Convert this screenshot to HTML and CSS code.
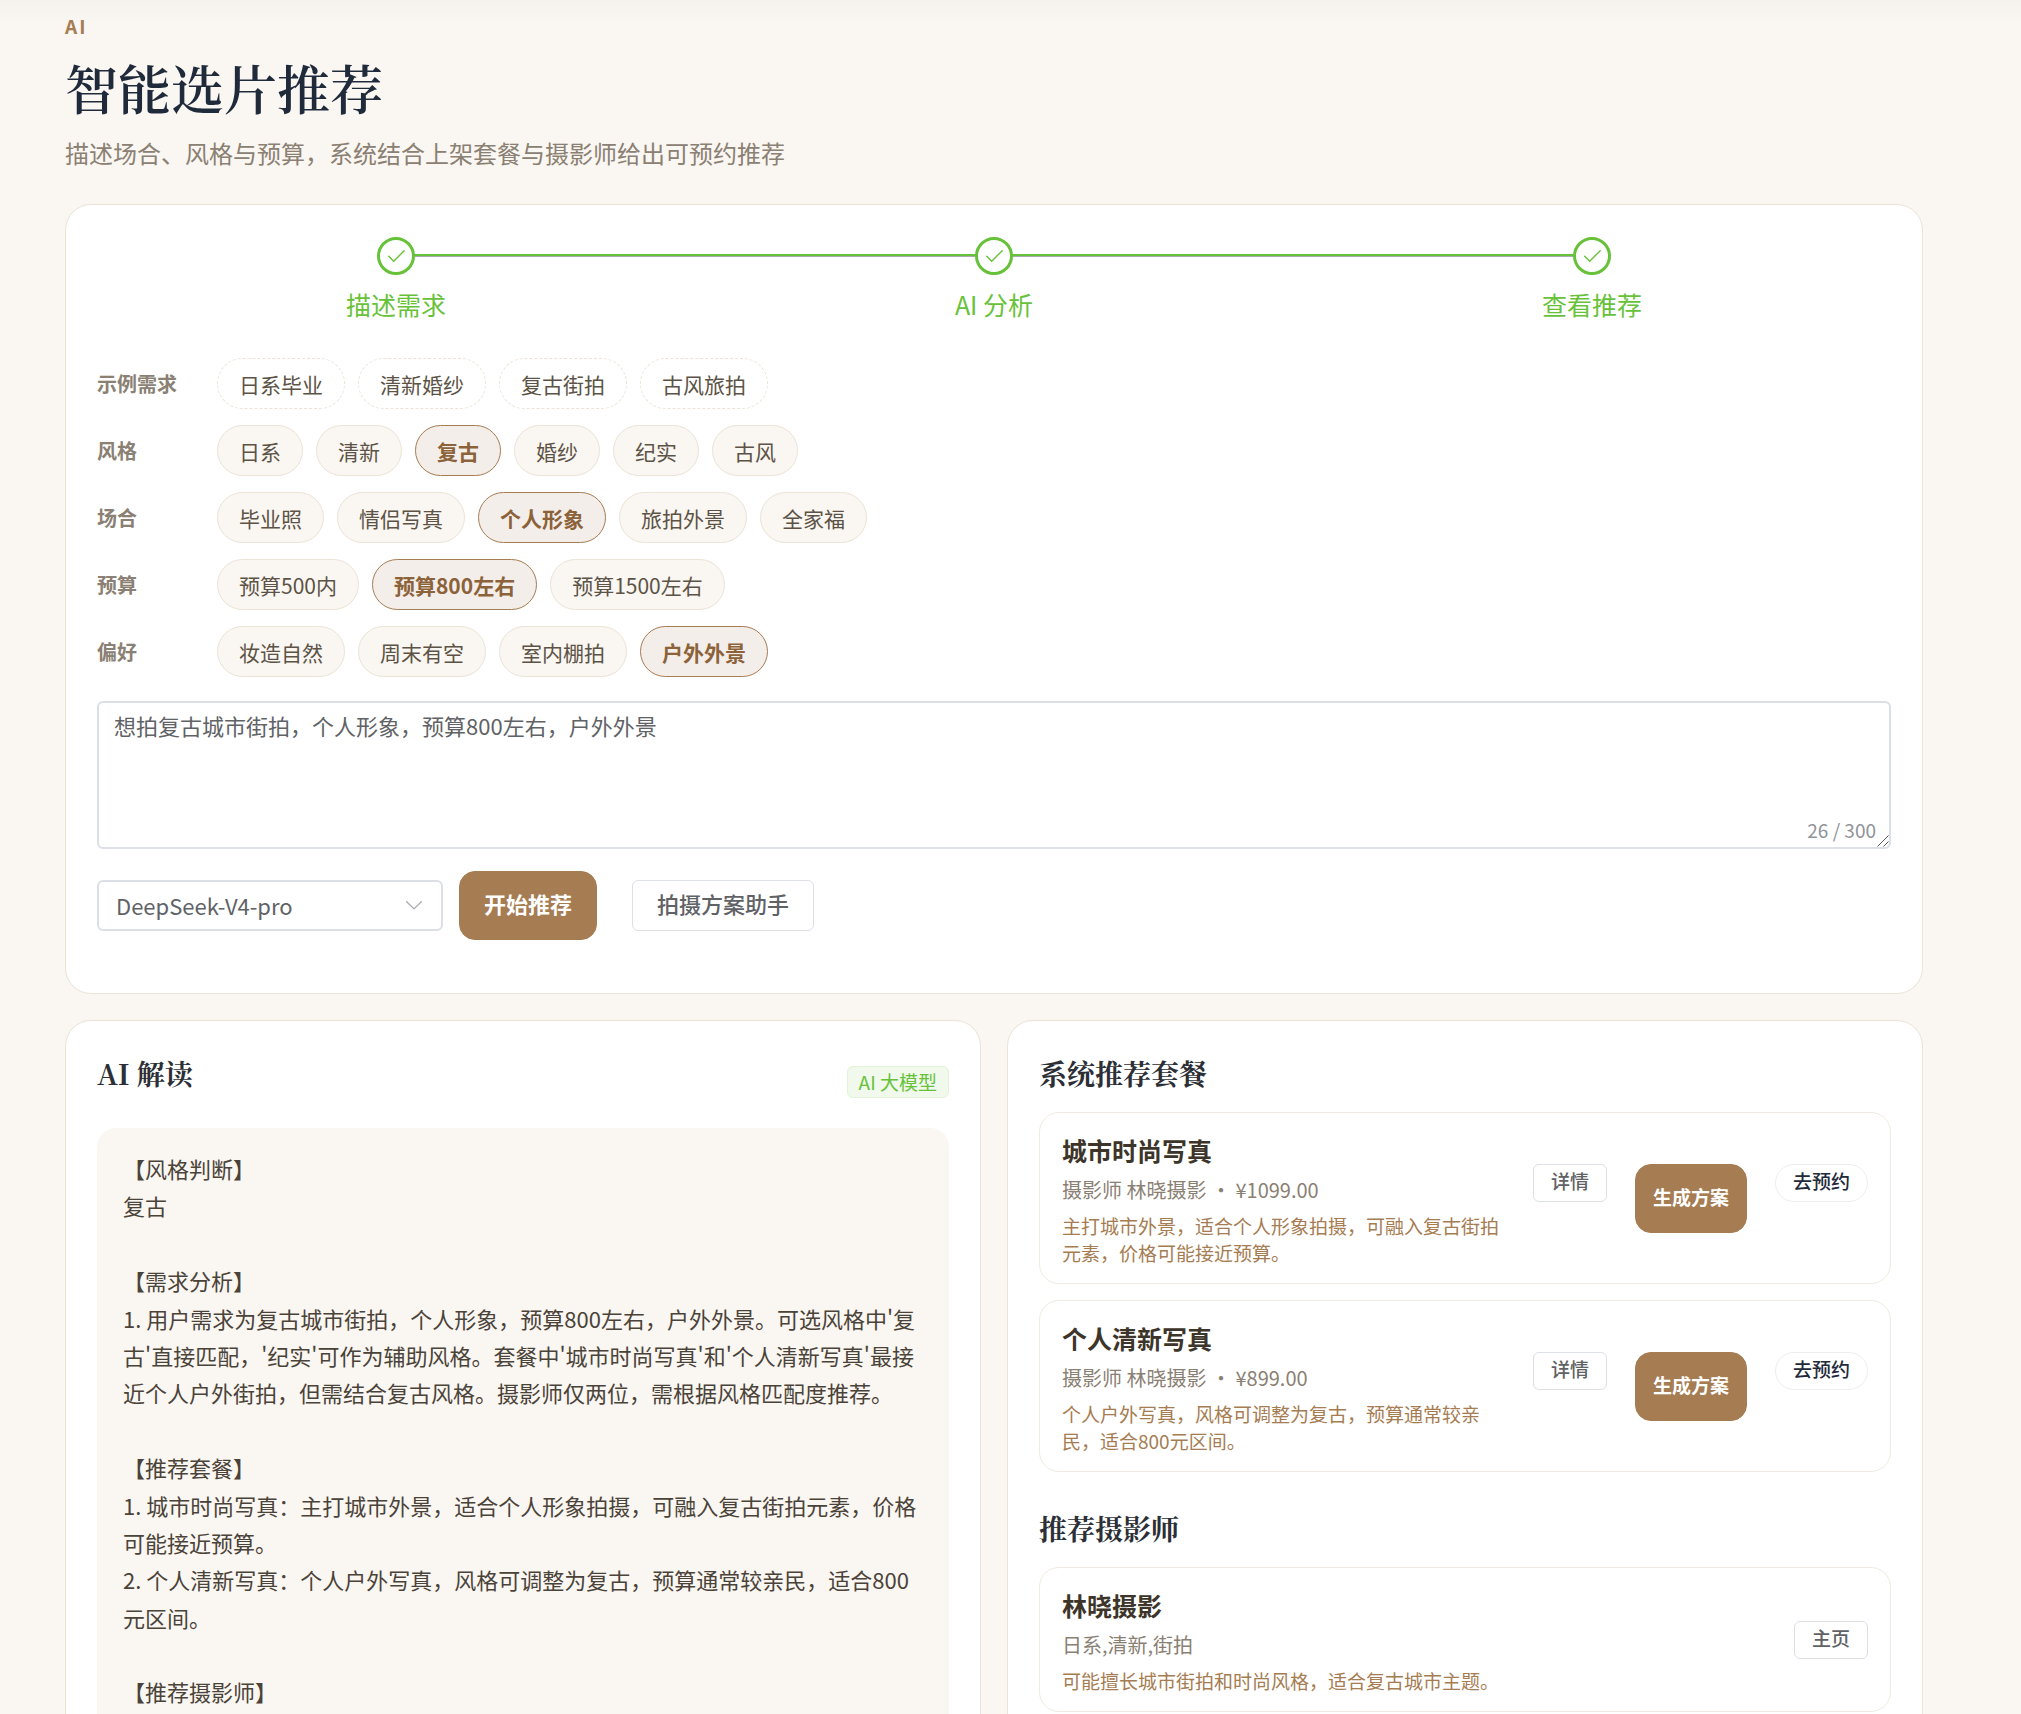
FILE: index.html
```html
<!DOCTYPE html>
<html lang="zh-CN">
<head>
  <meta charset="UTF-8">
  <meta name="viewport" content="width=device-width, initial-scale=1.0">
  <title>智能选片推荐</title>
  <link rel="stylesheet" href="styles.css">
</head>
<body>
  <main class="page">
    <header class="page-head">
      <p class="eyebrow">AI</p>
      <h1>智能选片推荐</h1>
      <p class="subtitle">描述场合、风格与预算，系统结合上架套餐与摄影师给出可预约推荐</p>
    </header>

    <!-- Request form -->
    <section class="card form-card">
      <ol class="steps">
        <li class="step">
          <span class="step-icon"><svg viewBox="0 0 1024 1024"><path d="M406.656 706.944 195.84 496.256a32 32 0 1 0-45.248 45.248l256 256 512-512a32 32 0 0 0-45.248-45.248L406.592 706.944z"/></svg></span>
          <span class="step-title">描述需求</span>
        </li>
        <li class="step">
          <span class="step-icon"><svg viewBox="0 0 1024 1024"><path d="M406.656 706.944 195.84 496.256a32 32 0 1 0-45.248 45.248l256 256 512-512a32 32 0 0 0-45.248-45.248L406.592 706.944z"/></svg></span>
          <span class="step-title">AI 分析</span>
        </li>
        <li class="step">
          <span class="step-icon"><svg viewBox="0 0 1024 1024"><path d="M406.656 706.944 195.84 496.256a32 32 0 1 0-45.248 45.248l256 256 512-512a32 32 0 0 0-45.248-45.248L406.592 706.944z"/></svg></span>
          <span class="step-title">查看推荐</span>
        </li>
      </ol>

      <div class="chip-rows">
        <div class="chip-row">
          <span class="chip-label">示例需求</span>
          <div class="chips">
            <button type="button" class="chip dashed">日系毕业</button>
            <button type="button" class="chip dashed">清新婚纱</button>
            <button type="button" class="chip dashed">复古街拍</button>
            <button type="button" class="chip dashed">古风旅拍</button>
          </div>
        </div>
        <div class="chip-row">
          <span class="chip-label">风格</span>
          <div class="chips">
            <button type="button" class="chip">日系</button>
            <button type="button" class="chip">清新</button>
            <button type="button" class="chip active">复古</button>
            <button type="button" class="chip">婚纱</button>
            <button type="button" class="chip">纪实</button>
            <button type="button" class="chip">古风</button>
          </div>
        </div>
        <div class="chip-row">
          <span class="chip-label">场合</span>
          <div class="chips">
            <button type="button" class="chip">毕业照</button>
            <button type="button" class="chip">情侣写真</button>
            <button type="button" class="chip active">个人形象</button>
            <button type="button" class="chip">旅拍外景</button>
            <button type="button" class="chip">全家福</button>
          </div>
        </div>
        <div class="chip-row">
          <span class="chip-label">预算</span>
          <div class="chips">
            <button type="button" class="chip">预算500内</button>
            <button type="button" class="chip active">预算800左右</button>
            <button type="button" class="chip">预算1500左右</button>
          </div>
        </div>
        <div class="chip-row">
          <span class="chip-label">偏好</span>
          <div class="chips">
            <button type="button" class="chip">妆造自然</button>
            <button type="button" class="chip">周末有空</button>
            <button type="button" class="chip">室内棚拍</button>
            <button type="button" class="chip active">户外外景</button>
          </div>
        </div>
      </div>

      <div class="textarea-wrap">
        <textarea class="demand" maxlength="300" aria-label="需求描述">想拍复古城市街拍，个人形象，预算800左右，户外外景</textarea>
        <span class="count">26 / 300</span>
        <svg class="grip" viewBox="0 0 12 12"><path d="M0.5 11.5 11.5 0.5M6.5 11.5 11.5 6.5"/></svg>
      </div>

      <div class="actions">
        <div class="select-wrap">
          <select class="model" aria-label="模型">
            <option>DeepSeek-V4-pro</option>
          </select>
          <svg class="arrow" viewBox="0 0 1024 1024"><path d="M831.872 340.864 512 652.672 192.128 340.864a30.592 30.592 0 0 0-42.752 0 29.12 29.12 0 0 0 0 41.6L489.664 714.24a32 32 0 0 0 44.672 0l340.288-331.712a29.12 29.12 0 0 0 0-41.728 30.592 30.592 0 0 0-42.752 0z"/></svg>
        </div>
        <button type="button" class="btn btn-primary">开始推荐</button>
        <button type="button" class="btn btn-plain">拍摄方案助手</button>
      </div>
    </section>

    <!-- Results -->
    <div class="results">
      <section class="card">
        <div class="result-head">
          <h2>AI 解读</h2>
          <span class="tag">AI 大模型</span>
        </div>
        <div class="analysis">【风格判断】
复古

【需求分析】
1. 用户需求为复古城市街拍，个人形象，预算800左右，户外外景。可选风格中'复古'直接匹配，'纪实'可作为辅助风格。套餐中'城市时尚写真'和'个人清新写真'最接近个人户外街拍，但需结合复古风格。摄影师仅两位，需根据风格匹配度推荐。

【推荐套餐】
1. 城市时尚写真：主打城市外景，适合个人形象拍摄，可融入复古街拍元素，价格可能接近预算。
2. 个人清新写真：个人户外写真，风格可调整为复古，预算通常较亲民，适合800元区间。

【推荐摄影师】</div>
      </section>

      <section class="card">
        <h2>系统推荐套餐</h2>
        <div class="items">
          <article class="item">
            <div class="item-info">
              <h3>城市时尚写真</h3>
              <p class="meta">摄影师 林晓摄影 ・ ¥1099.00</p>
              <p class="reason">主打城市外景，适合个人形象拍摄，可融入复古街拍元素，价格可能接近预算。</p>
            </div>
            <div class="item-actions">
              <button type="button" class="btn btn-small">详情</button>
              <button type="button" class="btn btn-primary small">生成方案</button>
              <button type="button" class="btn btn-small round">去预约</button>
            </div>
          </article>
          <article class="item">
            <div class="item-info">
              <h3>个人清新写真</h3>
              <p class="meta">摄影师 林晓摄影 ・ ¥899.00</p>
              <p class="reason">个人户外写真，风格可调整为复古，预算通常较亲民，适合800元区间。</p>
            </div>
            <div class="item-actions">
              <button type="button" class="btn btn-small">详情</button>
              <button type="button" class="btn btn-primary small">生成方案</button>
              <button type="button" class="btn btn-small round">去预约</button>
            </div>
          </article>
        </div>

        <h2 class="second">推荐摄影师</h2>
        <div class="items">
          <article class="item">
            <div class="item-info">
              <h3>林晓摄影</h3>
              <p class="meta">日系,清新,街拍</p>
              <p class="reason">可能擅长城市街拍和时尚风格，适合复古城市主题。</p>
            </div>
            <div class="item-actions">
              <button type="button" class="btn btn-small">主页</button>
            </div>
          </article>
        </div>
      </section>
    </div>
  </main>
</body>
</html>
```
FILE: styles.css
```css
* {
  box-sizing: border-box;
}

body {
  margin: 0;
  font-family: "Noto Sans CJK SC", sans-serif;
  font-size: 22px;
  color: #4a4339;
  background: #faf6f1;
}

h1, h2, h3, p, ol {
  margin: 0;
  padding: 0;
}

button, select, textarea {
  font-family: inherit;
}

.page {
  height: 100vh;
  overflow: hidden;
  padding: 12px 98px 0 65px;
  background: linear-gradient(#f5f1ec, #faf6f1 24px);
}

.page-head {
  margin-bottom: 32px;
}

.eyebrow {
  font-size: 19px;
  line-height: 27px;
  font-weight: 600;
  letter-spacing: 2px;
  color: #a67c52;
}

h1 {
  margin: 13px 0 12px;
  font-family: "Noto Serif CJK SC", "Noto Serif SC", "Noto Sans CJK SC", serif;
  font-size: 53px;
  line-height: 70px;
  font-weight: 600;
  color: #1f2a3a;
}

.subtitle {
  font-size: 24px;
  line-height: 38px;
  color: #8a8073;
}

.card {
  background: #fff;
  border: 1px solid #ebe3d6;
  border-radius: 26px;
  padding: 31px;
}

.form-card {
  padding: 32px 31px 53px;
  margin-bottom: 26px;
}

/* Steps */
.steps {
  display: flex;
  list-style: none;
  margin-bottom: 35px;
}

.step {
  position: relative;
  flex: 1;
  display: flex;
  flex-direction: column;
  align-items: center;
  gap: 10px;
  color: #67c23a;
}

.step:not(:last-child)::after {
  content: "";
  position: absolute;
  top: 17px;
  left: 50%;
  width: 100%;
  height: 2px;
  background: #67c23a;
  border-bottom: 1px solid #a8abb2;
}

.step-icon {
  position: relative;
  z-index: 1;
  display: flex;
  align-items: center;
  justify-content: center;
  width: 38px;
  height: 38px;
  border: 3px solid #67c23a;
  border-radius: 50%;
  background: #fff;
}

.step-icon svg {
  width: 22px;
  height: 22px;
  fill: currentColor;
}

.step-title {
  font-size: 25px;
  line-height: 38px;
}

/* Chips */
.chip-rows {
  display: flex;
  flex-direction: column;
  gap: 16px;
  margin-bottom: 24px;
}

.chip-row {
  display: flex;
  align-items: center;
}

.chip-label {
  width: 120px;
  font-size: 20px;
  font-weight: 600;
  color: #8a8073;
}

.chips {
  display: flex;
  flex-wrap: wrap;
  gap: 13px;
}

.chip {
  height: 51px;
  padding: 0 21px;
  font-size: 21px;
  color: #5c5346;
  background: #faf6f1;
  border: 1px solid #ebe3d6;
  border-radius: 26px;
  cursor: pointer;
}

.chip.dashed {
  background: #fff;
  border-style: dashed;
}

.chip.active {
  color: #8b6239;
  font-weight: 600;
  background: #f4eeea;
  border-color: #a67c52;
}

/* Demand text */
.textarea-wrap {
  position: relative;
  margin-bottom: 22px;
}

.demand {
  display: block;
  width: 100%;
  height: 148px;
  padding: 6px 15px;
  font-size: 22px;
  line-height: 33px;
  color: #606266;
  background: #fff;
  border: 2px solid #dcdfe6;
  border-radius: 6px;
  outline: none;
  resize: vertical;
}

.demand::-webkit-resizer {
  background: transparent;
}

.count {
  position: absolute;
  right: 15px;
  bottom: 6px;
  font-size: 19px;
  line-height: 27px;
  color: #909399;
}

.grip {
  position: absolute;
  right: 2px;
  bottom: 2px;
  width: 12px;
  height: 12px;
  fill: none;
  stroke: #55585c;
  pointer-events: none;
}

.actions {
  display: flex;
  align-items: center;
}

.select-wrap {
  position: relative;
  width: 346px;
  margin-right: 16px;
}

.model {
  display: block;
  width: 100%;
  height: 51px;
  padding: 0 17px 2px;
  font-size: 22px;
  color: #606266;
  background: #fff;
  border: 2px solid #dcdfe6;
  border-radius: 6px;
  appearance: none;
}

.arrow {
  position: absolute;
  top: 14px;
  right: 18px;
  width: 22px;
  height: 22px;
  fill: #a8abb2;
  pointer-events: none;
}

.btn {
  padding: 0 24px 4px;
  font-size: 22px;
  font-weight: 500;
  line-height: 33px;
  color: #606266;
  background: #fff;
  border: 1px solid #dcdfe6;
  border-radius: 6px;
  white-space: nowrap;
  cursor: pointer;
}

.btn-plain {
  height: 51px;
  margin-left: 35px;
}

.btn-primary {
  height: 69px;
  font-weight: 600;
  color: #fff;
  background: #a67c52;
  border-color: #a67c52;
  border-radius: 16px;
}

.btn-primary.small {
  padding: 0 17px 4px;
  font-size: 19px;
}

.btn-small {
  height: 38px;
  padding: 0 17px 4px;
  font-size: 19px;
  line-height: 27px;
}

.btn-small.round {
  color: #1f2a3a;
  border-color: #eeeeee;
  border-radius: 19px;
}

/* Results */
.results {
  display: grid;
  grid-template-columns: 1fr 1fr;
  gap: 26px;
}

h2 {
  margin-bottom: 18px;
  font-family: "Noto Serif CJK SC", "Noto Serif SC", "Noto Sans CJK SC", serif;
  font-size: 28px;
  line-height: 42px;
  font-weight: 700;
  color: #2c2f36;
}

h2.second {
  margin-top: 35px;
}

.result-head {
  display: flex;
  justify-content: space-between;
  align-items: center;
  margin-bottom: 16px;
}

.tag {
  padding: 0 11px;
  font-size: 19px;
  line-height: 30px;
  color: #67c23a;
  background: #f0f9eb;
  border: 1px solid #e1f3d8;
  border-radius: 6px;
}

.analysis {
  padding: 22px 26px;
  line-height: 1.7;
  white-space: pre-wrap;
  background: #faf6f1;
  border-radius: 19px;
}

.items {
  display: flex;
  flex-direction: column;
  gap: 16px;
}

.item {
  display: flex;
  justify-content: space-between;
  align-items: center;
  gap: 16px;
  padding: 17px 22px;
  border: 1px solid #f0ebe2;
  border-radius: 20px;
}

h3 {
  font-size: 25px;
  line-height: 40px;
  font-weight: 600;
  color: #3d3529;
}

.meta {
  margin: 6px 0 9px;
  font-size: 20px;
  line-height: 27px;
  color: #8a8073;
}

.reason {
  font-size: 19px;
  line-height: 27px;
  color: #a67c52;
}

.item-actions {
  display: flex;
  align-items: flex-start;
  flex-shrink: 0;
  gap: 28px;
}
```
